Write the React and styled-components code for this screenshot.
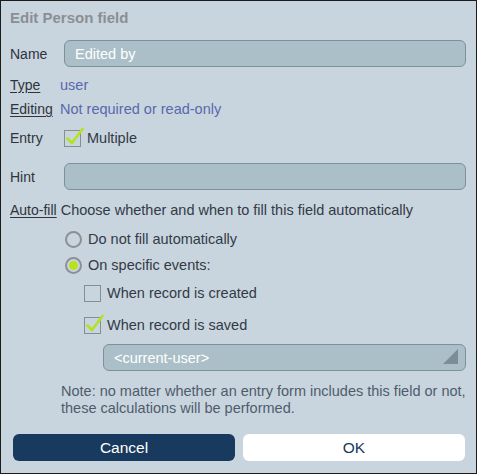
import React from "react";
import styled, { createGlobalStyle } from "styled-components";

const GlobalStyle = createGlobalStyle`
    html, body {
        margin: 0;
        padding: 0;
        background: #c8d5df;
    }
    * {
        box-sizing: border-box;
    }
`

const Dialog = styled.div`
    width: 477px;
    height: 474px;
    border: 1px solid #1c1c1c;
    background: #c8d5df;
    padding: 7px 10px 0 9px;
    display: flex;
    flex-direction: column;
    font-family: "Liberation Sans", Arial, sans-serif;
    font-size: 14.5px;
    color: #333a44;
`

const Title = styled.div`
    height: 20px;
    line-height: 20px;
    font-size: 15px;
    font-weight: 700;
    color: #8a8f95;
`

const Row = styled.div`
    display: flex;
    align-items: center;
    height: ${p => p.h || 20}px;
    margin-top: ${p => p.mt || 0}px;
    padding-left: ${p => p.indent || 0}px;
`

const Label = styled.div`
    min-width: 50px;
    padding-right: 4px;
    flex-shrink: 0;
    font-size: 14px;
    color: #2f343b;
    span {
        text-decoration: ${p => p.link ? "underline" : "none"};
        text-underline-offset: 2px;
    }
`

const Value = styled.div`
    color: #5a68ad;
`

const TextInput = styled.div`
    flex: 1;
    height: 27px;
    margin-left: 4px;
    border: 1px solid #7e9099;
    border-radius: 6px;
    background: #abbfc8;
    color: #ffffff;
    padding-left: 10px;
    display: flex;
    align-items: center;
`

const Select = styled(TextInput)`
    position: relative;
    margin-left: 0;
`

const SelectArrow = styled.div`
    position: absolute;
    right: 7px;
    bottom: 6px;
    width: 0;
    height: 0;
    border-left: 15px solid transparent;
    border-bottom: 15px solid #7d8d96;
`

const Box = styled.div`
    position: relative;
    width: 17px;
    height: 17px;
    border: 1px solid #878d93;
    flex-shrink: 0;
    margin-right: 6px;
`

const Tick = styled.svg`
    position: absolute;
    left: 1px;
    top: -5px;
`

const Radio = styled.div`
    width: 17px;
    height: 17px;
    border-radius: 50%;
    border: 2px solid #8c9095;
    flex-shrink: 0;
    margin-right: 6px;
    display: flex;
    align-items: center;
    justify-content: center;
    &::after {
        content: "";
        width: 9px;
        height: 9px;
        border-radius: 50%;
        background: ${p => p.on ? "#b7e21c" : "transparent"};
    }
`

const OptionText = styled.div`
    color: #333a44;
`

const Note = styled.div`
    margin-top: 12px;
    padding-left: 51px;
    line-height: 17px;
    color: #4f5c6b;
`

const Buttons = styled.div`
    display: grid;
    grid-template-columns: 1fr 1fr;
    gap: 8px;
    margin-top: 17px;
    padding-left: 3px;
    padding-right: 1px;
`

const Button = styled.div`
    height: 27px;
    border-radius: 6px;
    background: ${p => p.primary ? "#173a5e" : "#ffffff"};
    color: ${p => p.primary ? "#ffffff" : "#173a5e"};
    font-size: 15.5px;
    display: flex;
    align-items: center;
    justify-content: center;
`

const Check = ({ checked, label }) => (
    <>
        <Box>
            {checked && (
                <Tick width="20" height="20" viewBox="0 0 20 20">
                    <path d="M1.5 12.5 L6 17 L16.5 3" fill="none" stroke="#b2e41e" strokeWidth="2.6" strokeLinecap="round" strokeLinejoin="round" />
                </Tick>
            )}
        </Box>
        <OptionText>{label}</OptionText>
    </>
)

const App = () => {
    return (
        <Dialog>
            <GlobalStyle />
            <Title>Edit Person field</Title>
            <Row h={27} mt={12}>
                <Label><span>Name</span></Label>
                <TextInput>Edited by</TextInput>
            </Row>
            <Row mt={8}>
                <Label link><span>Type</span></Label>
                <Value>user</Value>
            </Row>
            <Row mt={4}>
                <Label link><span>Editing</span></Label>
                <Value>Not required or read-only</Value>
            </Row>
            <Row mt={9}>
                <Label><span>Entry</span></Label>
                <div style={{ width: 4 }} />
                <Check checked label="Multiple" />
            </Row>
            <Row h={27} mt={15}>
                <Label><span>Hint</span></Label>
                <TextInput />
            </Row>
            <Row mt={10}>
                <Label link><span>Auto-fill</span></Label>
                <OptionText>Choose whether and when to fill this field automatically</OptionText>
            </Row>
            <Row mt={9} indent={55}>
                <Radio />
                <OptionText>Do not fill automatically</OptionText>
            </Row>
            <Row mt={6} indent={55}>
                <Radio on />
                <OptionText>On specific events:</OptionText>
            </Row>
            <Row mt={8} indent={74}>
                <Check label="When record is created" />
            </Row>
            <Row mt={12} indent={74}>
                <Check checked label="When record is saved" />
            </Row>
            <Row h={27} mt={9} indent={93}>
                <Select>
                    &lt;current-user&gt;
                    <SelectArrow />
                </Select>
            </Row>
            <Note>
                Note: no matter whether an entry form includes this field or not,<br />
                these calculations will be performed.
            </Note>
            <Buttons>
                <Button primary>Cancel</Button>
                <Button>OK</Button>
            </Buttons>
        </Dialog>
    )
}

export default App;
